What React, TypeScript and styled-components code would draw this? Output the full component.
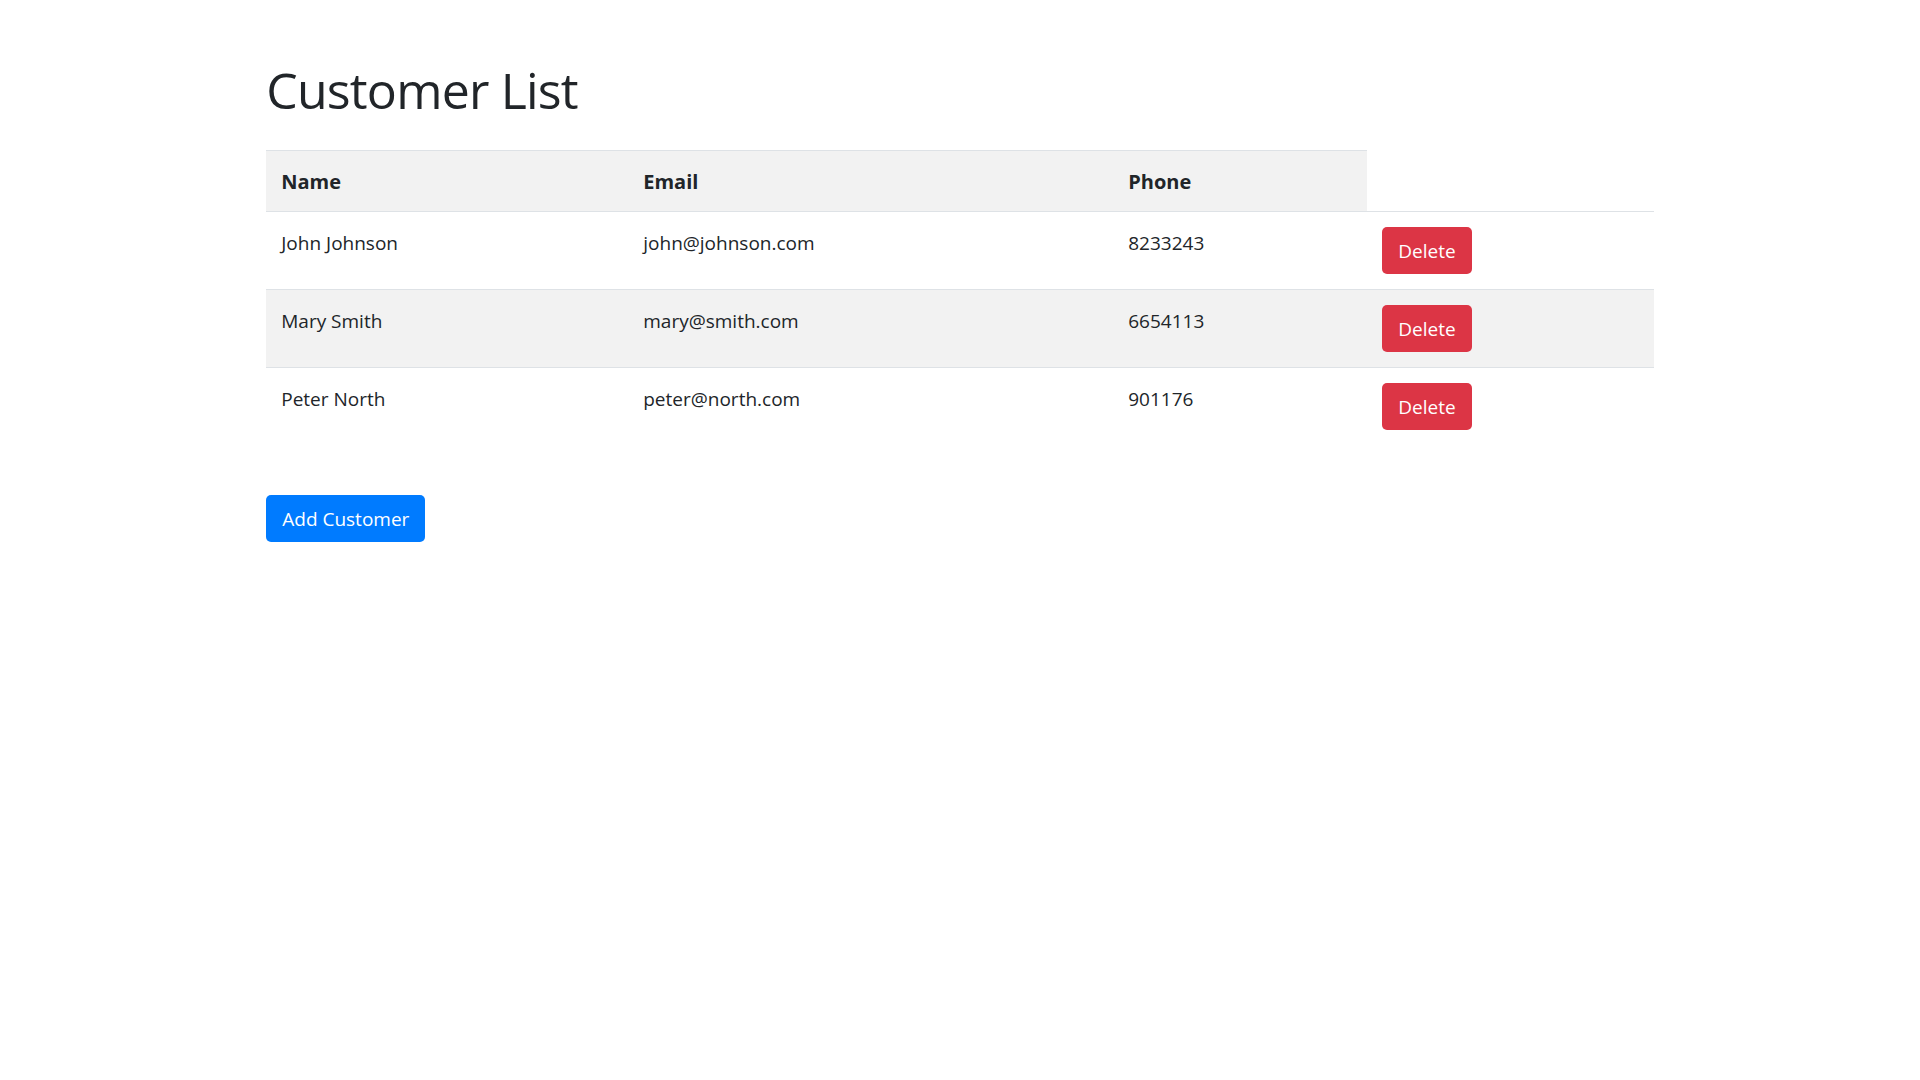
import styled, { createGlobalStyle } from "styled-components";

const GlobalStyle = createGlobalStyle`
    * {
        box-sizing: border-box;
    }

    body {
        margin: 0;
        background-color: #fff;
        color: #212529;
        font-family: "Open Sans", "Noto Sans", sans-serif;
        font-size: 20px;
        line-height: 1.5;
    }
`;

const Container = styled.div`
    max-width: 1425px;
    margin: 60px auto 0;
    padding: 0 18.75px;
`;

const Title = styled.h1`
    margin: 0 0 30px;
    font-size: 50px;
    font-weight: 500;
    line-height: 1.2;
    letter-spacing: -0.8px;
`;

const Table = styled.table`
    width: 100%;
    margin-bottom: 20px;
    border-collapse: collapse;
    table-layout: fixed;
`;

const Row = styled.tr<{ $striped?: boolean }>`
    background-color: ${(p) => (p.$striped ? "rgba(0, 0, 0, 0.05)" : "transparent")};
`;

const HeaderCell = styled.th`
    padding: 16px 15px 14px;
    border-top: 1px solid #dee2e6;
    text-align: left;
    vertical-align: top;
    font-weight: 700;
`;

const Cell = styled.td`
    padding: 17px 15px 13px;
    border-top: 1px solid #dee2e6;
    vertical-align: top;
    font-size: 19px;
`;

const ActionCell = styled(Cell)`
    padding: 15px;
`;

const Button = styled.button<{ $variant: "danger" | "primary" }>`
    display: inline-block;
    padding: 7.5px 15px;
    border: 1.25px solid transparent;
    border-radius: 5px;
    background-color: ${(p) => (p.$variant === "danger" ? "#dc3545" : "#007bff")};
    color: #fff;
    font-family: inherit;
    font-size: 19px;
    line-height: 30px;
    cursor: pointer;
`;

const Actions = styled.div`
    margin-top: 50px;
`;

const customers = [
    { name: "John Johnson", email: "john@johnson.com", phone: "8233243" },
    { name: "Mary Smith", email: "mary@smith.com", phone: "6654113" },
    { name: "Peter North", email: "peter@north.com", phone: "901176" },
];

function App() {
    return (
        <>
            <GlobalStyle />
            <Container>
                <Title>Customer List</Title>

                <Table>
                    <colgroup>
                        <col style={{ width: 362 }} />
                        <col style={{ width: 485 }} />
                        <col style={{ width: 254 }} />
                        <col />
                    </colgroup>
                    <tbody>
                        <Row $striped>
                            <HeaderCell>Name</HeaderCell>
                            <HeaderCell>Email</HeaderCell>
                            <HeaderCell>Phone</HeaderCell>
                        </Row>
                        {customers.map((customer, index) => (
                            <Row key={customer.email} $striped={index % 2 === 1}>
                                <Cell>{customer.name}</Cell>
                                <Cell>{customer.email}</Cell>
                                <Cell>{customer.phone}</Cell>
                                <ActionCell>
                                    <Button $variant="danger">Delete</Button>
                                </ActionCell>
                            </Row>
                        ))}
                    </tbody>
                </Table>

                <Actions>
                    <Button $variant="primary">Add Customer</Button>
                </Actions>
            </Container>
        </>
    );
}

export default App;
